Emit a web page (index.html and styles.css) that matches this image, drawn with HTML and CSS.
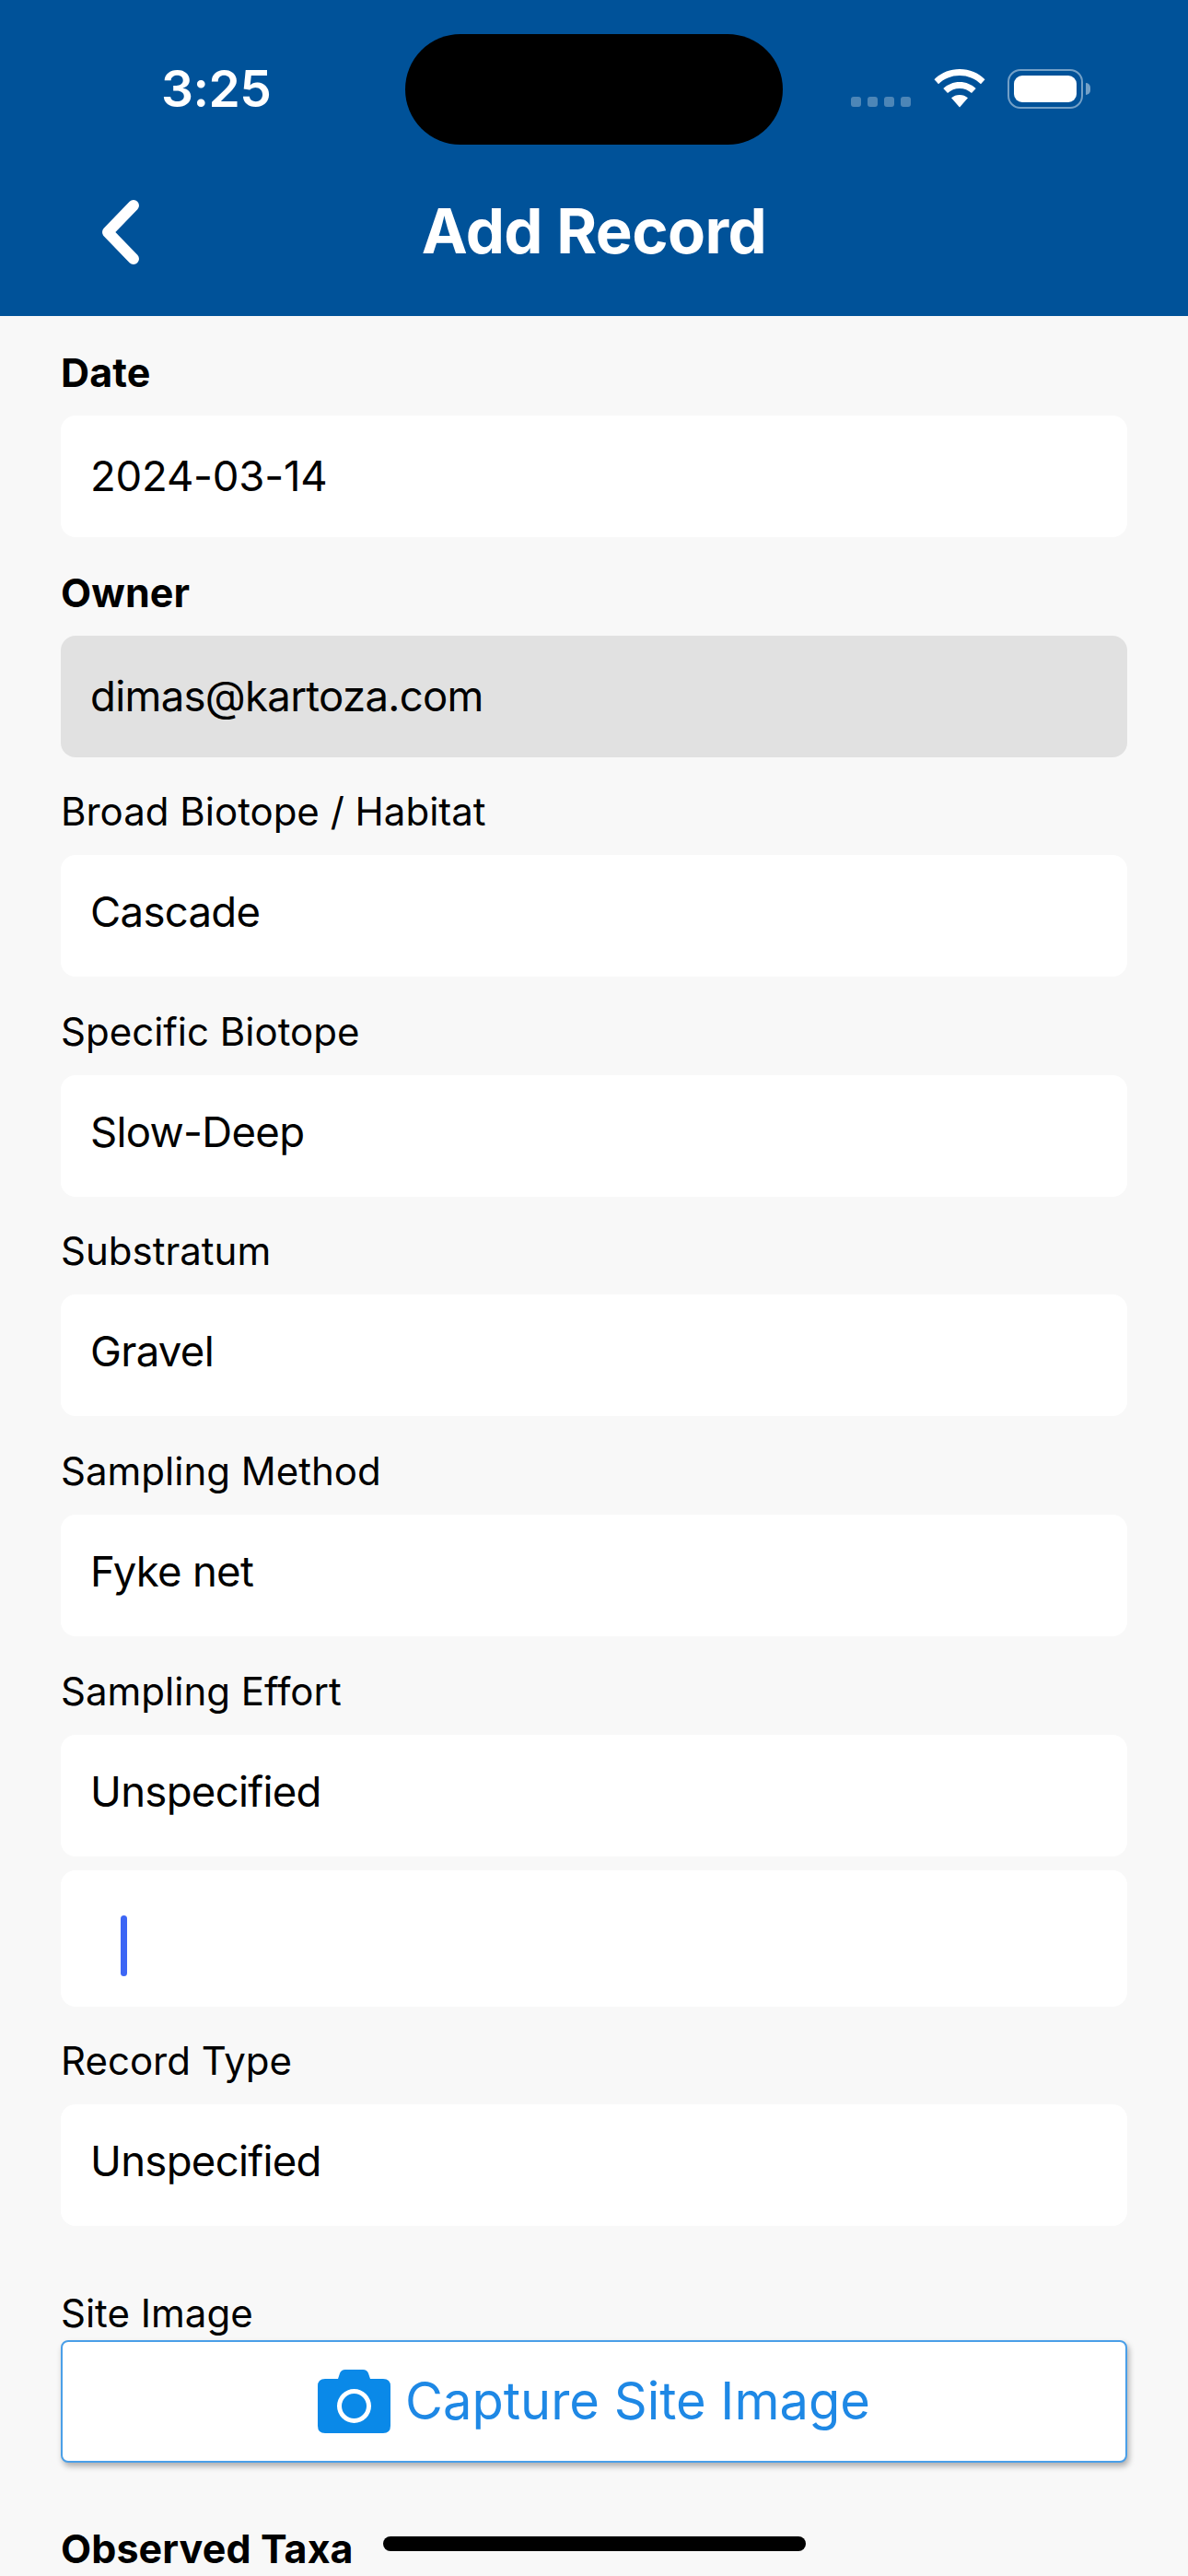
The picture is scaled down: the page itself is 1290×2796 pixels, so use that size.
FILE: index.html
```html
<!DOCTYPE html>
<html lang="en">
<head>
<meta charset="utf-8">
<title>Add Record</title>
<link rel="stylesheet" href="styles.css">
</head>
<body>
<div class="screen">
  <header class="header">
    <div class="status">
      <span class="time">3:25</span>
      <div class="island"></div>
      <div class="indicators">
        <div class="signal"><i></i><i></i><i></i><i></i></div>
        <svg class="wifi" width="56" height="42" viewBox="0 0 56 42"><path fill="#fff" d="M28 0C39 0 48.500 4.200 55.500 11.200L51 16.200C45 10.400 37 7 28 7S11 10.400 5 16.200L.5 11.200C7.500 4.200 17 0 28 0ZM28 14C35 14 41 16.700 45.700 21L41 26C37.500 22.900 33 21 28 21S18.500 22.900 15 26L10.300 21C15 16.700 21 14 28 14ZM28 28C31.500 28 34.500 29.200 37 31.300L28 41.500 19 31.300C21.500 29.200 24.500 28 28 28Z"/></svg>
        <div class="battery"><div class="battery-fill"></div></div>
        <div class="battery-tip"></div>
      </div>
    </div>
    <div class="titlebar">
      <svg class="back" width="44" height="70" viewBox="0 0 44 70"><path d="M37 6 9 35l28 29" fill="none" stroke="#fff" stroke-width="12" stroke-linecap="round" stroke-linejoin="round"/></svg>
      <h1 class="title">Add Record</h1>
    </div>
  </header>
  <main class="form">
    <section class="field"><label class="label strong">Date</label><div class="input date">2024-03-14</div></section>
    <section class="field"><label class="label strong">Owner</label><div class="input disabled">dimas@kartoza.com</div></section>
    <section class="field"><label class="label">Broad Biotope / Habitat</label><div class="input select">Cascade</div></section>
    <section class="field"><label class="label">Specific Biotope</label><div class="input select">Slow-Deep</div></section>
    <section class="field"><label class="label">Substratum</label><div class="input select">Gravel</div></section>
    <section class="field"><label class="label">Sampling Method</label><div class="input select">Fyke net</div></section>
    <section class="field"><label class="label">Sampling Effort</label><div class="input select">Unspecified</div><div class="input blank"><span class="caret"></span></div></section>
    <section class="field"><label class="label">Record Type</label><div class="input select">Unspecified</div></section>
    <section class="field site"><label class="label">Site Image</label>
      <button class="capture">
        <svg class="camera" width="79" height="69" viewBox="0 0 79 69"><path fill="#0a89e8" fill-rule="evenodd" d="M8 10H22L24 4Q25.500 0 30 0H49Q53.500 0 55 4L57 10H71Q79 10 79 18V61Q79 69 71 69H8Q0 69 0 61V18Q0 10 8 10ZM39.500 21A18.500 18.500 0 1 0 39.500 58 18.500 18.500 0 1 0 39.500 21ZM39.500 26A13.500 13.500 0 1 1 39.500 53 13.500 13.500 0 1 1 39.500 26Z"/></svg>
        <span>Capture Site Image</span>
      </button>
    </section>
    <h2 class="label strong taxa">Observed Taxa</h2>
  </main>
  <div class="home"></div>
</div>
</body>
</html>
```
FILE: styles.css
```css
* { box-sizing: border-box; }
html, body { margin: 0; padding: 0; }
body { font-family: Inter, "Liberation Sans", sans-serif; background: #f8f8f8; color: #000; }
.screen { position: relative; width: 1290px; height: 2796px; overflow: hidden; background: #f8f8f8; }

.header { height: 343px; background: #005299; color: #fff; }
.status { position: relative; display: flex; justify-content: space-between; height: 157px; padding: 0 106px 0 175px; }
.time { margin-top: 64px; font-size: 55px; line-height: 64px; font-weight: 600; letter-spacing: -0.5px; }
.island { position: absolute; left: 440px; top: 37px; width: 410px; height: 120px; border-radius: 60px; background: #000; }
.indicators { display: flex; align-items: flex-start; margin-top: 75px; }
.signal { display: flex; gap: 7px; margin: 30px 25px 0 0; }
.signal i { width: 11px; height: 11px; border-radius: 3px; background: rgba(255,255,255,.3); }
.wifi { margin-right: 24px; }
.battery { width: 82px; height: 43px; padding: 5px; border: 2.500px solid rgba(255,255,255,.45); border-radius: 14px; }
.battery-fill { width: 100%; height: 100%; border-radius: 9px; background: #fff; }
.battery-tip { width: 5px; height: 13px; margin: 15px 0 0 3px; border-radius: 0 6px 6px 0; background: rgba(255,255,255,.45); }
.titlebar { position: relative; display: flex; justify-content: center; align-items: center; height: 110px; margin-top: 39px; }
.back { position: absolute; left: 108px; top: 21px; }
.title { margin: 0; font-size: 67px; line-height: 80px; font-weight: 700; letter-spacing: -0.6px; }

.form { display: flex; flex-direction: column; gap: 34.600px; padding: 36px 66px 0; }
.field { display: flex; flex-direction: column; }
.label { display: block; height: 48px; margin: 0 0 24px; font-size: 42px; line-height: 50px; font-weight: 400; }
.strong { font-size: 43px; font-weight: 700; letter-spacing: 0.1px; }
.input { display: flex; align-items: center; height: 132px; padding: 0 32px; border-radius: 16px; background: #fff; font-size: 45.500px; line-height: 56px; letter-spacing: -0.7px; }
.date { letter-spacing: -0.2px; }
.select { padding-bottom: 8px; }
.disabled { background: #e1e1e1; }
.blank { height: 148px; margin-top: 15px; padding: 16px 65px 0; }
.caret { width: 7px; height: 66px; border-radius: 4px; background: #3d66f5; }

.site { margin-top: 35px; }
.site .label { margin-bottom: 6px; }
.capture { display: flex; justify-content: center; align-items: center; gap: 16px; width: 100%; height: 133px; padding: 0; border: 2px solid #4a9fe8; border-radius: 8px; background: #fff; box-shadow: 2px 4px 6px rgba(0,0,0,.3); color: #1e88e5; font: 400 56px/72px Inter, "Liberation Sans", sans-serif; }
.taxa { margin: 34px 0 0; }

.home { position: absolute; left: 416px; top: 2753px; width: 459px; height: 16px; border-radius: 8px; background: #000; }
```
